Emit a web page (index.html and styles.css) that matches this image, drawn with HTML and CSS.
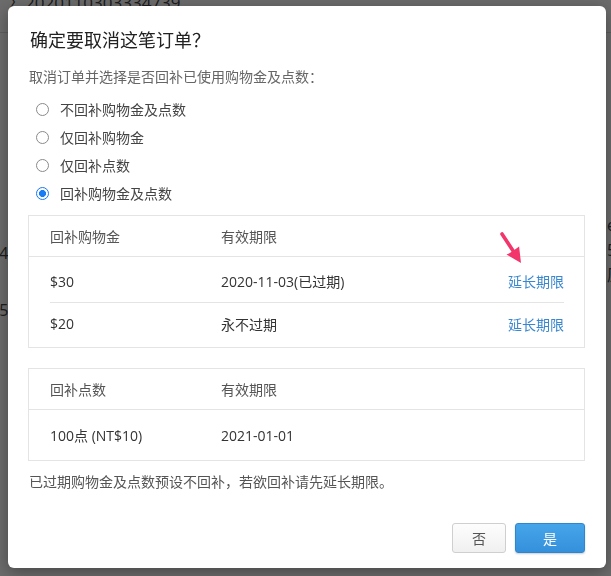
FILE: index.html
```html
<!DOCTYPE html>
<html lang="zh-CN">
<head>
    <meta charset="UTF-8">
    <title>取消订单</title>
    <link rel="stylesheet" href="styles.css">
</head>
<body>
    <div class="page">
        <div class="page-title">〉2020110303334739</div>
        <div class="page-gap"></div>
        <div class="page-row">
            <span class="page-left">34<br>35</span>
            <span class="page-right">e<br>5<br>原</span>
        </div>
    </div>

    <div class="mask">
        <div class="modal">
            <h1 class="modal-title">确定要取消这笔订单<span class="q">？</span></h1>
            <p class="modal-desc">取消订单并选择是否回补已使用购物金及点数：</p>

            <div class="radio-list">
                <label class="radio"><input type="radio" name="refund"> 不回补购物金及点数</label>
                <label class="radio"><input type="radio" name="refund"> 仅回补购物金</label>
                <label class="radio"><input type="radio" name="refund"> 仅回补点数</label>
                <label class="radio"><input type="radio" name="refund" checked> 回补购物金及点数</label>
            </div>

            <div class="table">
                <div class="table-head">
                    <span class="col-1">回补购物金</span>
                    <span class="col-2">有效期限</span>
                </div>
                <div class="table-body">
                    <div class="table-row">
                        <span class="col-1">$30</span>
                        <span class="col-2">2020-11-03(已过期)</span>
                        <a class="link" href="#">延长期限</a>
                    </div>
                    <div class="table-row">
                        <span class="col-1">$20</span>
                        <span class="col-2">永不过期</span>
                        <a class="link" href="#">延长期限</a>
                    </div>
                </div>

                <!-- 标注箭头 -->
                <svg class="pointer" width="32" height="40" viewBox="0 0 32 40">
                    <path d="M6 6 L17.5 23.5" stroke="#f2356b" stroke-width="3.6" stroke-linecap="round" fill="none"/>
                    <path d="M25 35 L10.5 26.6 Q15 24.5 23.1 18.4 Z" fill="#f2356b"/>
                </svg>
            </div>

            <div class="table">
                <div class="table-head">
                    <span class="col-1">回补点数</span>
                    <span class="col-2">有效期限</span>
                </div>
                <div class="table-body">
                    <div class="table-row big">
                        <span class="col-1">100点 (NT$10)</span>
                        <span class="col-2">2021-01-01</span>
                    </div>
                </div>
            </div>

            <p class="modal-note">已过期购物金及点数预设不回补，若欲回补请先延长期限。</p>

            <div class="modal-footer">
                <button class="btn">否</button>
                <button class="btn btn-primary">是</button>
            </div>
        </div>
    </div>
</body>
</html>
```

FILE: styles.css
```css
* {
    box-sizing: border-box;
}

body {
    margin: 0;
    height: 100vh;
    overflow: hidden;
    background: #fff;
    font-family: "Open Sans", "Noto Sans CJK SC", sans-serif;
    font-size: 14px;
    color: #333;
}

/* 底层页面 */
.page {
    margin-top: -9px;
    color: #444;
}

.page-title {
    height: 42px;
    padding-left: 8px;
    font-size: 17px;
    line-height: 24px;
    border-bottom: 1px solid #ddd;
}

.page-gap {
    height: 180px;
}

.page-row {
    display: flex;
    justify-content: space-between;
    font-size: 16px;
}

.page-left {
    margin-left: -10px;
    padding-top: 12px;
    line-height: 57px;
}

.page-right {
    width: 4px;
    line-height: 25px;
}

/* 遮罩 */
.mask {
    position: fixed;
    inset: 0;
    background: rgba(0, 0, 0, 0.58);
}

.modal {
    position: relative;
    width: 598px;
    margin: 6px 0 0 8px;
    padding: 20px 21px 15px 20px;
    background: #fff;
    border-radius: 6px;
    box-shadow: 0 4px 16px rgba(0, 0, 0, 0.35);
}

.modal-title {
    margin: 0 0 0 2px;
    font-size: 18px;
    font-weight: normal;
    line-height: 26px;
    color: #222;
}

.modal-title .q {
    font-family: "Noto Sans CJK TC", sans-serif;
}

.modal-desc {
    margin: 14px 0 0 1px;
    line-height: 20px;
    color: #666;
}

.radio-list {
    display: flex;
    flex-direction: column;
    margin-top: 8px;
}

.radio {
    display: flex;
    align-items: center;
    gap: 11px;
    height: 28px;
    color: #444;
}

.radio input {
    appearance: none;
    width: 13px;
    height: 13px;
    margin: 0 0 0 8px;
    border: 1px solid #8a8a8a;
    border-radius: 50%;
    background: #fff;
}

.radio input:checked {
    border: 1px solid #1877f2;
    background: radial-gradient(circle, #1a7cf5 0 3.2px, #fff 3.8px);
}

.table {
    position: relative;
    margin-top: 8px;
    border: 1px solid #e4e4e4;
}

.table + .table {
    margin-top: 20px;
}

.table-head {
    display: flex;
    align-items: center;
    height: 41px;
    padding: 0 20px 0 21px;
    border-bottom: 1px solid #e4e4e4;
    color: #555;
}

.table-body {
    padding: 0 20px 0 21px;
}

.table-row {
    display: flex;
    align-items: center;
    height: 45px;
}

.table-row:first-child {
    padding-top: 3px;
}

.table-row + .table-row {
    border-top: 1px solid #e4e4e4;
    padding-bottom: 3px;
}

.table-row.big {
    height: 50px;
    padding-top: 0;
}

.col-1 {
    width: 171px;
}

.col-2 {
    flex: 1;
}

.link {
    color: #3a87d0;
    text-decoration: none;
}

.pointer {
    position: absolute;
    left: 467px;
    top: 12px;
}

.modal-note {
    margin: 11px 0 0 1px;
    line-height: 20px;
    color: #555;
}

.modal-footer {
    display: flex;
    justify-content: flex-end;
    gap: 9px;
    margin-top: 31px;
}

.btn {
    width: 54px;
    height: 30px;
    border: 1px solid #cfcfcf;
    border-radius: 3px;
    background: linear-gradient(#fdfdfd, #f0f0f0);
    font-family: inherit;
    font-size: 14px;
    color: #555;
}

.btn-primary {
    width: 70px;
    border-color: #2f86d0;
    background: linear-gradient(#45a5ea, #3590db);
    color: #fff;
    box-shadow: 0 1px 2px rgba(0, 0, 0, 0.2);
}
```
